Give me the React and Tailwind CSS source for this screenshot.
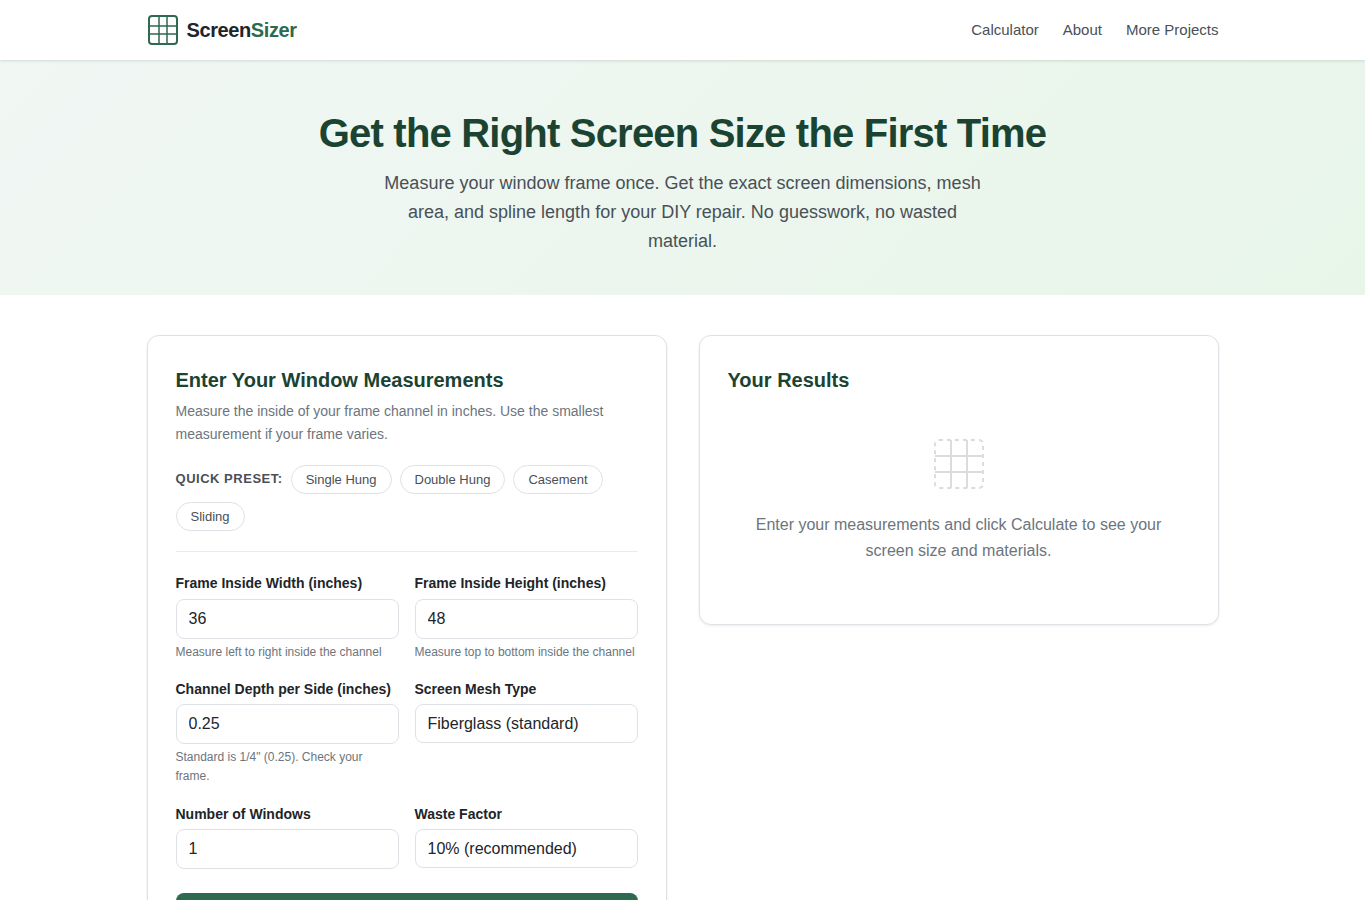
import { useState } from 'react';

const NAV_LINKS = ['Calculator', 'About', 'More Projects'];

const PRESETS = [
  { name: 'Single Hung', width: '36', height: '48' },
  { name: 'Double Hung', width: '32', height: '54' },
  { name: 'Casement', width: '24', height: '48' },
  { name: 'Sliding', width: '60', height: '36' }
];

const MESH_TYPES = ['Fiberglass (standard)', 'Aluminum', 'Pet-resistant', 'Solar screen'];
const WASTE_FACTORS = ['5% (minimal)', '10% (recommended)', '15% (first timer)'];

const cardClass = 'rounded-xl border border-[#dee2e6] bg-white p-7 shadow-[0_1px_3px_rgba(0,0,0,0.08)]';

const controlClass =
  'block w-full appearance-none rounded-lg border border-[#dee2e6] bg-white px-3 text-base text-[#212529] outline-none focus:border-[#2d6a4f]';

function Logo() {
  return (
    <svg className="h-8 w-8" viewBox="0 0 32 32" fill="none" stroke="#2d6a4f">
      <rect x="2" y="2" width="28" height="28" rx="3" strokeWidth="2" />
      <path d="M2 12H30M2 20H30M12 2V30M20 2V30" strokeWidth="1.5" />
    </svg>
  );
}

function EmptyIcon() {
  return (
    <svg className="h-16 w-16" viewBox="0 0 64 64" fill="none" stroke="#dadcde" strokeWidth="2">
      <rect x="8" y="8" width="48" height="48" rx="4" strokeDasharray="4 4" />
      <path d="M8 24H56M8 40H56M24 8V56M40 8V56" />
    </svg>
  );
}

function Field({ label, hint, children }) {
  return (
    <label className="block">
      <span className="mb-1 block text-sm leading-[22.4px] font-semibold whitespace-nowrap">{label}</span>
      {children}
      {hint && <span className="mt-1 block text-xs leading-[19.2px] text-[#6c757d]">{hint}</span>}
    </label>
  );
}

function NumberInput({ value, onChange }) {
  return (
    <input
      type="text"
      inputMode="decimal"
      value={value}
      onChange={(e) => onChange(e.target.value)}
      className={`${controlClass} h-10`}
    />
  );
}

function Select({ value, options, onChange }) {
  return (
    <select value={value} onChange={(e) => onChange(e.target.value)} className={`${controlClass} h-[39px]`}>
      {options.map((option) => (
        <option key={option}>{option}</option>
      ))}
    </select>
  );
}

export default function App() {
  const [width, setWidth] = useState('36');
  const [height, setHeight] = useState('48');
  const [depth, setDepth] = useState('0.25');
  const [mesh, setMesh] = useState(MESH_TYPES[0]);
  const [count, setCount] = useState('1');
  const [waste, setWaste] = useState(WASTE_FACTORS[1]);

  function applyPreset(preset) {
    setWidth(preset.width);
    setHeight(preset.height);
  }

  return (
    <div className="min-h-screen bg-white font-['Liberation_Sans',Arial,sans-serif] leading-[1.6] text-[#212529]">
      <header className="relative z-10 bg-white shadow-[0_1px_3px_rgba(0,0,0,0.12)]">
        <div className="mx-auto flex h-[60px] max-w-[1120px] items-center justify-between px-6">
          <a href="#" className="flex items-center gap-2">
            <Logo />
            <span className="text-xl font-bold tracking-[-0.4px]">
              Screen<span className="text-[#2d6a4f]">Sizer</span>
            </span>
          </a>
          <nav className="flex gap-6 text-[15px] text-[#495057]">
            {NAV_LINKS.map((link) => (
              <a key={link} href="#" className="hover:text-[#2d6a4f]">{link}</a>
            ))}
          </nav>
        </div>
      </header>

      {/* Hero */}
      <section className="bg-[linear-gradient(135deg,#f0f7f4_0%,#e8f5e9_100%)] px-6 pt-[49px] pb-10 text-center">
        <h1 className="mb-3 text-[40px] leading-[1.2] font-bold tracking-[-0.8px] text-[#1b4332]">
          Get the Right Screen Size the First Time
        </h1>
        <p className="mx-auto max-w-[600px] text-lg leading-[28.8px] text-[#495057]">
          Measure your window frame once. Get the exact screen dimensions, mesh area, and spline length for your DIY
          repair. No guesswork, no wasted material.
        </p>
      </section>

      <main className="mx-auto grid max-w-[1120px] grid-cols-2 items-start gap-8 px-6 py-10">
        <section className={cardClass}>
          <h2 className="mb-1 text-xl leading-8 font-bold text-[#1b4332]">Enter Your Window Measurements</h2>
          <p className="mb-5 text-sm leading-[22.4px] text-[#6c757d]">
            Measure the inside of your frame channel in inches. Use the smallest measurement if your frame varies.
          </p>

          <div className="mb-5 flex flex-wrap items-center gap-2 border-b border-[#e9ecef] pb-5">
            <span className="text-[13px] font-semibold tracking-[0.52px] text-[#495057] uppercase">Quick Preset:</span>
            {PRESETS.map((preset) => (
              <button
                key={preset.name}
                type="button"
                onClick={() => applyPreset(preset)}
                className="h-[29px] cursor-pointer rounded-full border border-[#dee2e6] bg-white px-3.5 text-[13px] leading-[15px] text-[#495057]"
              >
                {preset.name}
              </button>
            ))}
          </div>

          <form onSubmit={(e) => e.preventDefault()}>
            <div className="grid grid-cols-2 gap-4">
              <Field label="Frame Inside Width (inches)" hint="Measure left to right inside the channel">
                <NumberInput value={width} onChange={setWidth} />
              </Field>
              <Field label="Frame Inside Height (inches)" hint="Measure top to bottom inside the channel">
                <NumberInput value={height} onChange={setHeight} />
              </Field>
              <Field label="Channel Depth per Side (inches)" hint={'Standard is 1/4" (0.25). Check your frame.'}>
                <NumberInput value={depth} onChange={setDepth} />
              </Field>
              <Field label="Screen Mesh Type">
                <Select value={mesh} options={MESH_TYPES} onChange={setMesh} />
              </Field>
              <Field label="Number of Windows">
                <NumberInput value={count} onChange={setCount} />
              </Field>
              <Field label="Waste Factor">
                <Select value={waste} options={WASTE_FACTORS} onChange={setWaste} />
              </Field>
            </div>
            <button
              type="submit"
              className="mt-6 w-full cursor-pointer rounded-lg bg-[#2d6a4f] py-3.5 text-base leading-5 font-semibold text-white"
            >
              Calculate
            </button>
          </form>
        </section>

        <section className={cardClass}>
          <h2 className="mb-1 text-xl leading-8 font-bold text-[#1b4332]">Your Results</h2>
          <div className="flex flex-col items-center px-5 py-8 text-center text-[#6c757d]">
            <EmptyIcon />
            <p className="mt-4 text-base leading-[25.6px]">
              Enter your measurements and click Calculate to see your screen size and materials.
            </p>
          </div>
        </section>
      </main>
    </div>
  );
}
